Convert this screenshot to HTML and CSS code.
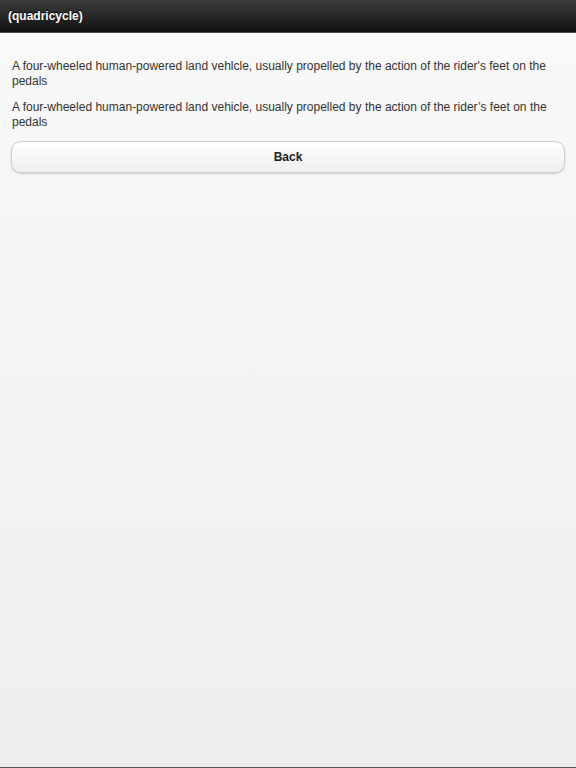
FILE: index.html
```html
<!DOCTYPE html>
<html>
<head>
<meta charset="utf-8">
<link rel="stylesheet" href="styles.css">
</head>
<body>
<div class="page">
  <div class="header"><h1 class="title">(quadricycle)</h1></div>
  <div class="content">
    <p class="para">A four-wheeled human-powered land vehlcle, usually propelled by the action of the rider's feet on the pedals</p>
    <p class="para">A four-wheeled human-powered land vehicle, usually propelled by the action of the rider’s feet on the pedals</p>
    <div class="btn">Back</div>
  </div>
</div>
</body>
</html>
```
FILE: styles.css
```css
html, body {
  margin: 0;
  padding: 0;
  height: 100%;
}
body {
  font-family: "Liberation Sans", Arial, sans-serif;
  background: #555;
}
.page {
  height: 767px;
  background: linear-gradient(#f9f9f9, #eeeeee);
  display: flex;
  flex-direction: column;
}
.header {
  height: 32px;
  background: linear-gradient(#3c3c3c, #111111);
  border-bottom: 1px solid #4a4a4a;
  display: flex;
  align-items: center;
  padding: 0 8px;
}
.title {
  margin: 0;
  font-size: 12px;
  font-weight: bold;
  color: #fff;
  text-shadow: 0 -1px 0 #000;
}
.content {
  padding: 26px 11px 0 12px;
}
.para {
  margin: 0 0 11px 0;
  font-size: 12px;
  line-height: 15px;
  color: #333;
}
.btn {
  margin-top: 11px;
  margin-left: -1px;
  height: 30px;
  border: 1px solid #cfcfcf;
  border-radius: 10px;
  background: linear-gradient(#fefefe, #efefef);
  box-shadow: 0 1px 2px rgba(0,0,0,0.18);
  display: flex;
  align-items: center;
  justify-content: center;
  font-size: 12px;
  font-weight: bold;
  color: #222;
}
```
